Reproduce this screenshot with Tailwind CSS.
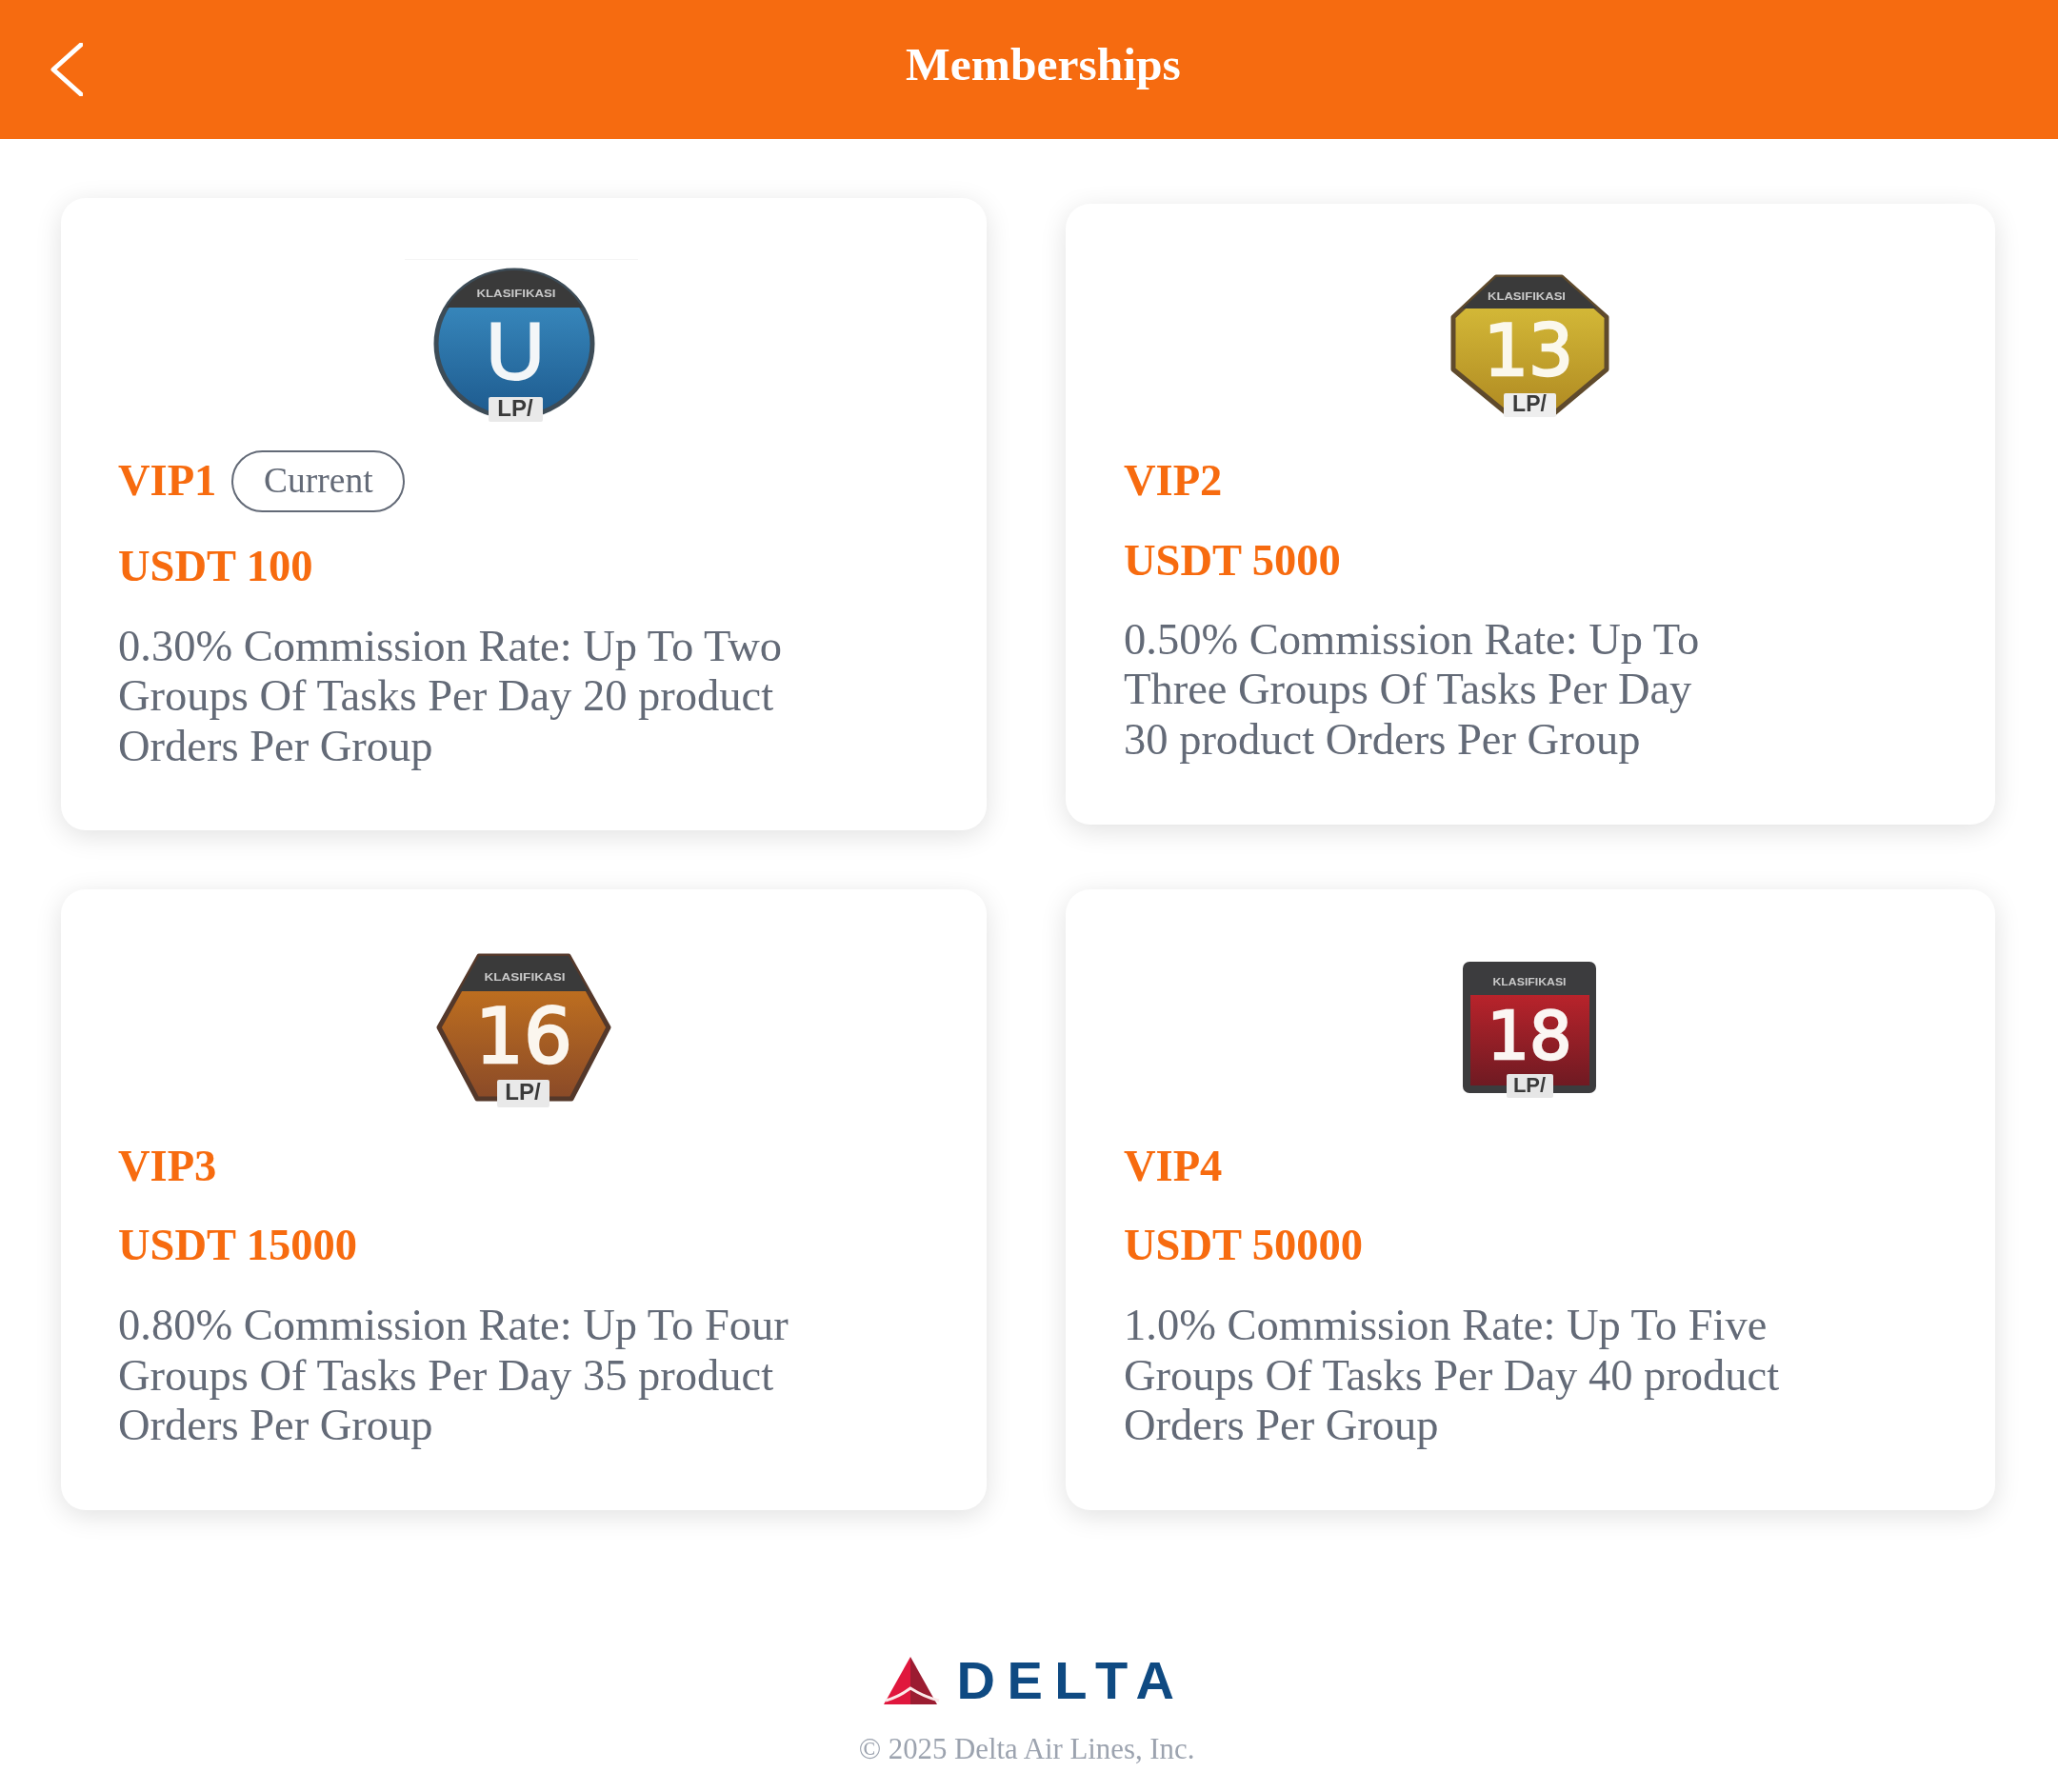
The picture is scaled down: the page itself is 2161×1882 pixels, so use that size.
<!DOCTYPE html>
<html lang="en">
<head>
    <meta charset="UTF-8">
    <meta name="viewport" content="width=device-width, initial-scale=1.0">
    <title>Memberships</title>
    <script src="https://cdn.jsdelivr.net/npm/@tailwindcss/browser@4"></script>
</head>
<body class="bg-white font-['Liberation_Serif',serif]">
  <div class="blur-[0.5px]">
    <!-- Header -->
    <header class="h-[146px] bg-[#f66b10] flex items-center pl-[53px]">
        <svg class="w-[34px] h-[56px]" viewBox="0 0 34 56" fill="none" stroke="#ffffff" stroke-width="5" stroke-linecap="round" stroke-linejoin="round">
            <polyline points="32,2 3,28 32,54"></polyline>
        </svg>
        <h1 class="ml-[864px] mb-[11px] text-[49.5px] leading-none font-bold text-white">Memberships</h1>
    </header>

    <!-- Membership cards -->
    <main class="grid grid-cols-[972px_976px] gap-x-[83px] gap-y-[62px] items-center pl-[64px] pt-[62px]">
        <!-- VIP1 -->
        <div class="bg-white rounded-[26px] shadow-[0_6px_28px_rgba(0,0,0,0.12)] px-[60px] pt-[60px] pb-[62px]">
            <div class="h-[178px] mb-[27px] pt-[4px] pl-[301px]">
                <div class="w-[245px] pt-[8px] pr-[15px] border-t border-[#f5f5f5] flex justify-center">
                    <svg class="w-[170px] h-[165px] blur-[0.5px]" viewBox="0 0 170 165">
                        <defs>
                            <linearGradient id="blue" x1="0" y1="0" x2="0" y2="1"><stop offset="0" stop-color="#3f94c9"></stop><stop offset="1" stop-color="#1d5a8e"></stop></linearGradient>
                            <clipPath id="circleClip"><ellipse cx="85" cy="80" rx="82" ry="77"></ellipse></clipPath>
                        </defs>
                        <ellipse cx="85" cy="80" rx="82" ry="77" fill="url(#blue)" stroke="#3d4c57" stroke-width="5"></ellipse>
                        <rect x="0" y="0" width="170" height="42" fill="#3a3a3a" clip-path="url(#circleClip)"></rect>
                        <text x="87" y="31" text-anchor="middle" textLength="83" lengthAdjust="spacingAndGlyphs" font-family="Liberation Sans" font-weight="700" font-size="11" fill="#c9c9c9">KLASIFIKASI</text>
                        <text x="86" y="117" text-anchor="middle" font-family="Liberation Sans" font-size="86" fill="#f3f6f8" stroke="#f3f6f8" stroke-width="2">U</text>
                        <rect x="58" y="136" width="57" height="26" rx="2" fill="#e9e9e9"></rect>
                        <text x="86" y="156" text-anchor="middle" font-family="Liberation Sans" font-weight="700" font-size="24" fill="#3a3a3a">LP/</text>
                    </svg>
                </div>
            </div>
            <div class="flex items-center gap-x-[16px] h-[65px]">
                <span class="text-[46.5px] leading-none font-bold text-[#f76b0f]">VIP1</span>
                <span class="w-[182px] h-[65px] rounded-full border-2 border-[#636a77] flex items-center justify-center text-[37.5px] text-[#636a77]">Current</span>
            </div>
            <p class="mt-[31px] text-[46.5px] leading-[52px] font-bold text-[#f76b0f]">USDT 100</p>
            <p class="mt-[32px] max-w-[712px] text-[46.5px] leading-[52.4px] text-[#636a77]">0.30% Commission Rate: Up To Two Groups Of Tasks Per Day 20&nbsp;product Orders Per Group</p>
        </div>

        <!-- VIP2 -->
        <div class="bg-white rounded-[26px] shadow-[0_6px_28px_rgba(0,0,0,0.12)] px-[61px] pt-[60px] pb-[63px]">
            <div class="h-[178px] mb-[27px] pt-[6px] flex items-center justify-center">
                <svg class="w-[170px] h-[160px] blur-[0.5px]" viewBox="0 0 170 160">
                    <defs>
                        <linearGradient id="gold" x1="0" y1="0" x2="0" y2="1"><stop offset="0" stop-color="#ddc53d"></stop><stop offset="1" stop-color="#b08a22"></stop></linearGradient>
                        <clipPath id="octClip"><polygon points="49,5 118,5 165,47 165,102 110,148 60,148 4,102 4,47"></polygon></clipPath>
                    </defs>
                    <polygon points="49,5 118,5 165,47 165,102 110,148 60,148 4,102 4,47" fill="url(#gold)" stroke="#5f4a2c" stroke-width="5" stroke-linejoin="round"></polygon>
                    <rect x="0" y="0" width="170" height="38" fill="#3a3a3a" clip-path="url(#octClip)"></rect>
                    <text x="81" y="29" text-anchor="middle" textLength="82" lengthAdjust="spacingAndGlyphs" font-family="Liberation Sans" font-weight="700" font-size="11" fill="#c9c9c9">KLASIFIKASI</text>
                    <text x="83" y="108" text-anchor="middle" font-family="DejaVu Sans" font-size="74" fill="#fbf8ec" stroke="#fbf8ec" stroke-width="2.5">13</text>
                    <rect x="57" y="127" width="55" height="25" rx="2" fill="#eeeeee"></rect>
                    <text x="84" y="146" text-anchor="middle" font-family="Liberation Sans" font-weight="700" font-size="23" fill="#3a3a3a">LP/</text>
                </svg>
            </div>
            <p class="text-[46.5px] leading-[52px] font-bold text-[#f76b0f]">VIP2</p>
            <p class="mt-[32px] text-[46.5px] leading-[52px] font-bold text-[#f76b0f]">USDT 5000</p>
            <p class="mt-[31px] max-w-[712px] text-[46.5px] leading-[52.4px] text-[#636a77]">0.50% Commission Rate: Up To Three Groups Of Tasks Per Day 30&nbsp;product Orders Per Group</p>
        </div>

        <!-- VIP3 -->
        <div class="bg-white rounded-[26px] shadow-[0_6px_28px_rgba(0,0,0,0.12)] px-[60px] pt-[60px] pb-[63px]">
            <div class="h-[178px] mb-[27px] flex items-center justify-center">
                <svg class="w-[192px] h-[165px] blur-[0.5px]" viewBox="0 0 192 165">
                    <defs>
                        <linearGradient id="bronze" x1="0" y1="0" x2="0" y2="1"><stop offset="0.2" stop-color="#c0701f"></stop><stop offset="1" stop-color="#8a4a28"></stop></linearGradient>
                        <clipPath id="hexClip"><polygon points="49,3 143,3 185,78 146,153 47,153 7,78"></polygon></clipPath>
                    </defs>
                    <polygon points="49,3 143,3 185,78 146,153 47,153 7,78" fill="url(#bronze)" stroke="#54382a" stroke-width="5" stroke-linejoin="round"></polygon>
                    <rect x="0" y="0" width="192" height="40" fill="#3a3a3a" clip-path="url(#hexClip)"></rect>
                    <text x="97" y="29" text-anchor="middle" textLength="85" lengthAdjust="spacingAndGlyphs" font-family="Liberation Sans" font-weight="700" font-size="11" fill="#c9c9c9">KLASIFIKASI</text>
                    <text x="96" y="115" text-anchor="middle" font-family="DejaVu Sans" font-size="80" fill="#fbf6ee" stroke="#fbf6ee" stroke-width="2.5">16</text>
                    <rect x="68" y="133" width="55" height="29" rx="2" fill="#e9e9e9"></rect>
                    <text x="95" y="154" text-anchor="middle" font-family="Liberation Sans" font-weight="700" font-size="24" fill="#3a3a3a">LP/</text>
                </svg>
            </div>
            <p class="text-[46.5px] leading-[52px] font-bold text-[#f76b0f]">VIP3</p>
            <p class="mt-[31px] text-[46.5px] leading-[52px] font-bold text-[#f76b0f]">USDT 15000</p>
            <p class="mt-[32px] max-w-[712px] text-[46.5px] leading-[52.4px] text-[#636a77]">0.80% Commission Rate: Up To Four Groups Of Tasks Per Day 35&nbsp;product Orders Per Group</p>
        </div>

        <!-- VIP4 -->
        <div class="bg-white rounded-[26px] shadow-[0_6px_28px_rgba(0,0,0,0.12)] px-[61px] pt-[60px] pb-[63px]">
            <div class="h-[178px] mb-[27px] flex items-center justify-center">
                <svg class="w-[146px] h-[150px] blur-[0.5px]" viewBox="0 0 146 150">
                    <defs>
                        <linearGradient id="ruby" x1="0" y1="0" x2="0" y2="1"><stop offset="0" stop-color="#b8232b"></stop><stop offset="1" stop-color="#6f1a22"></stop></linearGradient>
                    </defs>
                    <rect x="2" y="2" width="140" height="138" rx="7" fill="#3c3c3e"></rect>
                    <rect x="10" y="37" width="125" height="95" fill="url(#ruby)"></rect>
                    <text x="72" y="27" text-anchor="middle" textLength="77" lengthAdjust="spacingAndGlyphs" font-family="Liberation Sans" font-weight="700" font-size="10" fill="#c9c9c9">KLASIFIKASI</text>
                    <text x="72" y="104" text-anchor="middle" font-family="DejaVu Sans" font-size="70" fill="#fbf6f3" stroke="#fbf6f3" stroke-width="2.5">18</text>
                    <rect x="48" y="120" width="49" height="25" rx="2" fill="#e6e6e6"></rect>
                    <text x="72" y="139" text-anchor="middle" font-family="Liberation Sans" font-weight="700" font-size="22" fill="#3a3a3a">LP/</text>
                </svg>
            </div>
            <p class="text-[46.5px] leading-[52px] font-bold text-[#f76b0f]">VIP4</p>
            <p class="mt-[31px] text-[46.5px] leading-[52px] font-bold text-[#f76b0f]">USDT 50000</p>
            <p class="mt-[32px] max-w-[712px] text-[46.5px] leading-[52.4px] text-[#636a77]">1.0% Commission Rate: Up To Five Groups Of Tasks Per Day 40&nbsp;product Orders Per Group</p>
        </div>
    </main>

    <!-- Footer -->
    <footer class="mt-[154px] flex flex-col items-center">
        <div class="flex items-center gap-x-[16px] h-[50px] pl-[12px]">
            <svg class="w-[61px] h-[50px] blur-[0.4px]" viewBox="0 0 61 50">
                <polygon points="28,0 28,50 0,50" fill="#e0173d"></polygon>
                <polygon points="28,0 56,50 28,50" fill="#9b1c31"></polygon>
                <path d="M2 46 Q16 42 28 33 Q42 42 58 46" fill="none" stroke="#fbe9e9" stroke-width="3"></path>
            </svg>
            <span class="text-[56px] leading-none font-bold tracking-[12.5px] text-[#0f4a82] font-['Liberation_Sans',sans-serif]">DELTA</span>
        </div>
        <p class="mt-[29px] mr-[5px] text-[30.8px] leading-[36px] text-[#9ca3af]">© 2025 Delta Air Lines, Inc.</p>
    </footer>
  </div>
</body>
</html>
